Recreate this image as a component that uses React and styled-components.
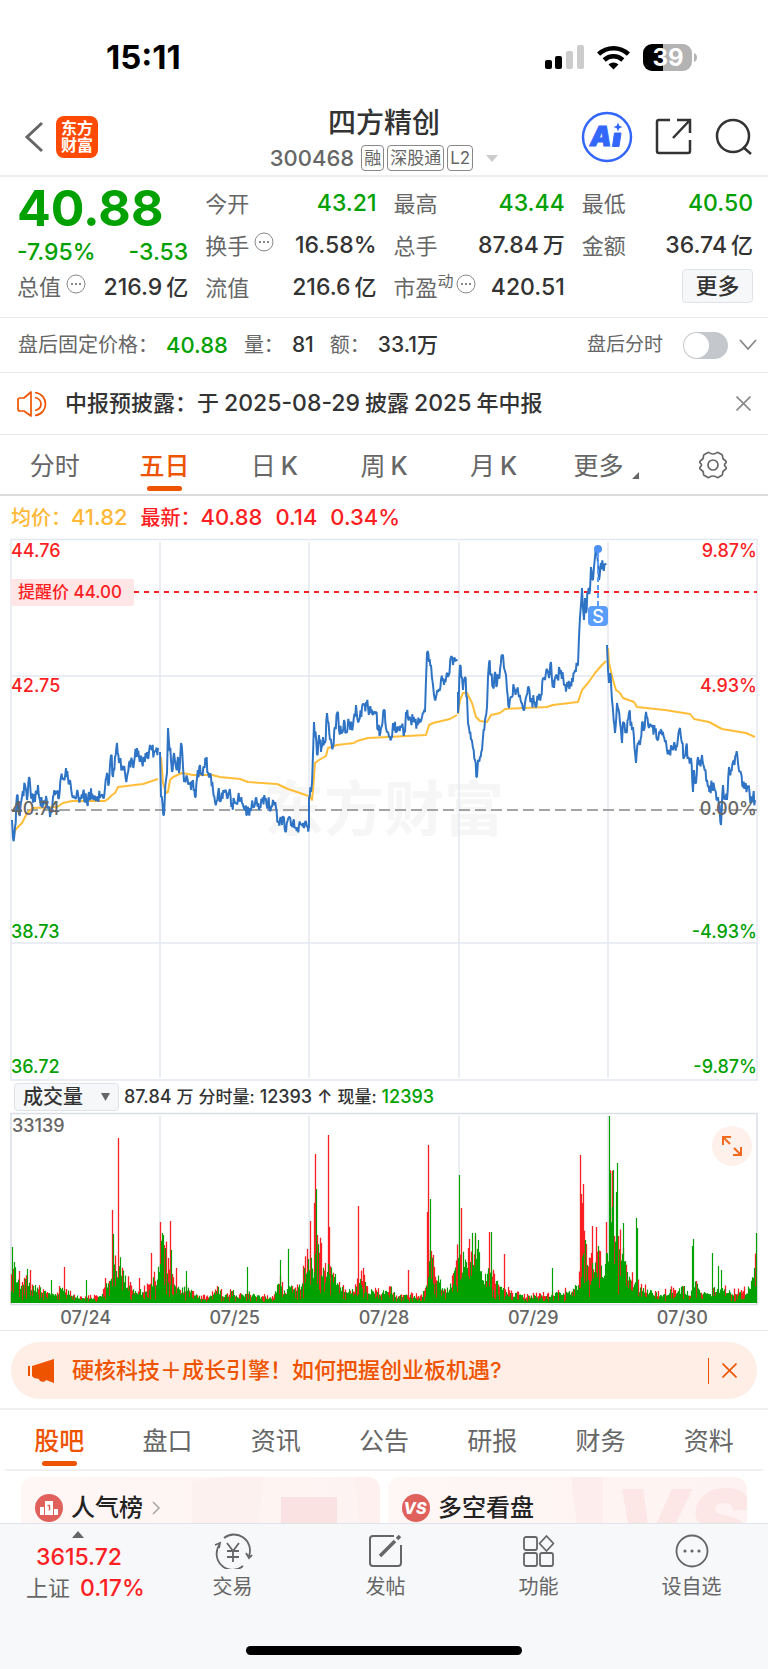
import React from "react";
import styled, { createGlobalStyle } from "styled-components";

const GREEN = "#02a102";
const RED = "#fb1f24";
const ORANGE = "#ee5400";

const GlobalStyle = createGlobalStyle`
  * {
    box-sizing: border-box;
  }
  body {
    margin: 0;
    background: #fff;
    color: #333;
    font-family: "Inter", "Noto Sans CJK SC", sans-serif;
    font-weight: 500;
    line-height: 1.3;
  }
  button,
  input,
  select {
    font: inherit;
    color: inherit;
  }
  button {
    border: 0;
    padding: 0;
    background: transparent;
    cursor: pointer;
  }
  svg {
    display: block;
    flex-shrink: 0;
  }
`;

const Page = styled.div`
  display: flex;
  flex-direction: column;
`;

const StatusBar = styled.div`
  display: flex;
  align-items: center;
  justify-content: space-between;
  height: 100px;
  padding: 14px 70px 0 106px;
  color: #000;

  .time {
    font-size: 33px;
    font-weight: 700;
  }
  .icons {
    display: flex;
    align-items: center;
    gap: 13px;
  }
`;

const Header = styled.header`
  display: grid;
  grid-template-columns: 1fr auto 1fr;
  align-items: center;
  height: 77px;
  padding: 0 16px 2px 24px;
  border-bottom: 2px solid #eeeef0;

  .left {
    display: flex;
    align-items: center;
    gap: 12px;
  }
  .right {
    display: flex;
    align-items: center;
    justify-content: flex-end;
    gap: 22px;
  }
`;

const Logo = styled.a`
  display: grid;
  place-content: center;
  width: 42px;
  height: 42px;
  border-radius: 8px;
  background: #ff4a03;
  color: #fff;
  font-size: 16px;
  font-weight: 700;
  line-height: 17px;
  text-decoration: none;
`;

const Title = styled.div`
  display: flex;
  flex-direction: column;
  align-items: center;
  gap: 4px;
  padding: 5px 8px 0 0;

  h1 {
    margin: 0;
    font-size: 28px;
    font-weight: 500;
    line-height: 34px;
  }
  .code {
    display: flex;
    align-items: center;
    gap: 3px;
    color: #666;
    font-size: 22px;
    line-height: 28px;
  }
  .code svg {
    margin-left: 10px;
  }
`;

const Tag = styled.span`
  margin-left: ${(p) => (p.$first ? "4px" : "0")};
  padding: 0 2px;
  border: 1px solid #888;
  border-radius: 4px;
  font-size: 17px;
  font-weight: 400;
  line-height: 24px;
`;

const Quote = styled.section`
  display: grid;
  grid-template-columns: repeat(4, minmax(0, 1fr));
  column-gap: 17px;
  padding: 6px 15px 8px 17px;
  border-bottom: 1px solid #e8eaf0;
  font-size: 23px;
`;

const QuoteColumn = styled.div`
  display: flex;
  flex-direction: column;

  .price {
    color: ${GREEN};
    font-size: 50px;
    font-weight: 700;
    line-height: 50px;
  }
  .change {
    display: flex;
    justify-content: space-between;
    color: ${GREEN};
    line-height: 38px;
  }
`;

const Stat = styled.div`
  display: flex;
  align-items: center;
  height: ${(p) => (p.$short ? "36px" : "42px")};
  padding-bottom: ${(p) => (p.$short ? "3px" : "0")};
  white-space: nowrap;

  .label {
    color: #666;
    font-size: 22px;
    font-weight: 400;
  }
  .sup {
    align-self: flex-start;
    color: #666;
    font-size: 16px;
    font-weight: 400;
    line-height: 28px;
  }
  svg {
    margin: 0 0 8px 5px;
  }
  .sup + svg {
    margin-left: 2px;
  }
  .value {
    margin-left: auto;
    color: ${(p) => (p.$green ? GREEN : "#333")};
  }
  .unit {
    margin-left: 4px;
    font-size: 22px;
  }
`;

const MoreButton = styled.button`
  align-self: flex-end;
  width: 71px;
  height: 34px;
  margin-top: 2px;
  border: 1px solid #dfe2e8;
  border-radius: 4px;
  background: #f6f7f9;
  font-size: 22px;
  line-height: 32px;
`;

const AfterHours = styled.section`
  display: flex;
  align-items: center;
  height: 55px;
  padding: 0 11px 0 18px;
  border-bottom: 1px solid #e8eaf0;
  font-size: 21px;

  .name {
    color: #666;
    font-size: 20px;
    font-weight: 400;
  }
  .num {
    margin: 0 16px 0 8px;
  }
  .green {
    color: ${GREEN};
    font-size: 22px;
  }
  .minute {
    display: flex;
    align-items: center;
    gap: 20px;
    margin-left: auto;
    color: #666;
    font-size: 19px;
    font-weight: 400;
  }
`;

const Switch = styled.input`
  appearance: none;
  width: 45px;
  height: 27px;
  margin: 0;
  padding: 1px;
  border-radius: 14px;
  background: #c4c7cc;
  cursor: pointer;

  &::before {
    content: "";
    display: block;
    width: 25px;
    height: 25px;
    border-radius: 50%;
    background: #fff;
  }
  &:checked {
    background: ${ORANGE};
  }
  &:checked::before {
    margin-left: 18px;
  }
`;

const Notice = styled.section`
  display: flex;
  align-items: center;
  height: 62px;
  padding: 0 17px;
  border-bottom: 1px solid #e4e6ea;
  font-size: 22px;

  p {
    flex: 1;
    margin: 0 0 0 18px;
  }
  .num {
    margin: 0 5px;
    font-size: 23px;
  }
`;

const Tabs = styled.nav`
  display: grid;
  grid-template-columns: repeat(7, 1fr);
  height: 61px;
  margin: ${(p) => p.$margin || "0"};
  border-bottom: 2px solid ${(p) => p.$line};
`;

const Tab = styled.button`
  display: flex;
  flex-direction: column;
  align-items: center;
  justify-content: flex-end;
  gap: 3px;
  padding-bottom: ${(p) => (p.$icon ? "14px" : "3px")};
  color: ${(p) => (p.$active ? ORANGE : "#666")};
  font-size: 25px;
  font-weight: ${(p) => (p.$active ? 500 : 400)};
  line-height: 34px;
  white-space: nowrap;

  &::after {
    content: "";
    display: ${(p) => (p.$icon ? "none" : "block")};
    width: 35px;
    height: 5px;
    border-radius: 3px;
    background: ${(p) => (p.$active ? ORANGE : "transparent")};
  }
  .latin {
    margin-left: 5px;
    font-weight: 500;
  }
  .more {
    display: flex;
    align-items: flex-end;
    gap: 9px;
    padding-left: 6px;
  }
  .more svg {
    margin-bottom: 4px;
  }
`;

const Averages = styled.div`
  display: flex;
  align-items: center;
  gap: 13px;
  height: 43px;
  padding: 0 11px;
  color: ${RED};
  font-size: 22px;

  .label {
    font-size: 20px;
  }
  .avg {
    color: #ffb836;
  }
`;

const ChartBox = styled.div`
  position: relative;
  margin: 0 11px;

  > svg {
    width: 100%;
    height: auto;
    overflow: visible;
  }
  text {
    font-size: 18px;
  }
`;

const VolumeBar = styled.div`
  display: flex;
  align-items: center;
  gap: 5px;
  height: 32px;
  padding: 0 14px;
  color: #333;
  font-size: 18px;
  white-space: nowrap;

  .cjk {
    font-size: 17px;
  }
  .green {
    color: ${GREEN};
  }
`;

const SelectWrap = styled.label`
  display: grid;
  align-items: center;

  select,
  svg {
    grid-area: 1 / 1;
  }
  select {
    appearance: none;
    width: 105px;
    height: 28px;
    padding: 0 8px;
    border: 1px solid #dfe2e8;
    border-radius: 4px;
    background: #f6f7f9;
    font-size: 20px;
    line-height: 26px;
  }
  svg {
    justify-self: end;
    margin-right: 9px;
    pointer-events: none;
  }
`;

const ExpandButton = styled.button`
  position: absolute;
  top: 13px;
  right: 5px;
  display: grid;
  place-items: center;
  width: 40px;
  height: 40px;
  border-radius: 50%;
  background: #fef1eb;
`;

const Dates = styled.div`
  display: grid;
  grid-template-columns: repeat(5, 1fr);
  height: 26px;
  padding: 0 11px;
  border-bottom: 1px solid #e4e6ec;
  color: #666;
  font-size: 18px;
  line-height: 26px;
  text-align: center;
`;

const BannerArea = styled.section`
  padding: 11px 11px 9px;
  border-bottom: 2px solid #f0f0f2;
`;

const Banner = styled.div`
  display: flex;
  align-items: center;
  height: 57px;
  padding: 0 20px 0 17px;
  border-radius: 29px;
  background: #feeee6;
  color: ${ORANGE};
  font-size: 22px;

  a {
    flex: 1;
    margin-left: 17px;
    color: inherit;
    text-decoration: none;
  }
  .bar {
    width: 1px;
    height: 26px;
    margin-right: 13px;
    background: ${ORANGE};
  }
`;

const Cards = styled.section`
  display: grid;
  grid-template-columns: 1fr 1fr;
  gap: 8px;
  height: 52px;
  padding: 6px 21px 0;
  overflow: hidden;
`;

const Card = styled.a`
  display: flex;
  align-items: center;
  gap: 8px;
  height: 62px;
  padding-left: 14px;
  border-radius: 12px 12px 0 0;
  background: linear-gradient(90deg, #fef7f5, #fef3f2);
  color: #222;
  font-size: 24px;
  line-height: 26px;
  overflow: hidden;
  text-decoration: none;

  .art {
    align-self: flex-start;
    margin-left: auto;
  }
`;

const BottomNav = styled.nav`
  display: grid;
  grid-template-columns: 156px repeat(4, 1fr);
  height: 104px;
  border-top: 1px solid #dfe3ea;
  background: #f7f8fa;
`;

const IndexButton = styled.button`
  display: flex;
  flex-direction: column;
  align-items: flex-start;
  padding: 7px 0 0 26px;
  color: ${RED};
  font-size: 23px;
  line-height: 31px;
  white-space: nowrap;

  svg {
    margin-left: 46px;
  }
  .point {
    margin: 4px 0 0 10px;
  }
  .name {
    margin-right: 10px;
    color: #666;
    font-size: 22px;
    font-weight: 400;
  }
`;

const NavButton = styled.button`
  display: flex;
  flex-direction: column;
  align-items: center;
  gap: 4px;
  padding-top: 9px;
  color: #666;
  font-size: 20px;
  font-weight: 400;
  line-height: 28px;
`;

const HomeArea = styled.div`
  display: grid;
  justify-items: center;
  align-items: start;
  height: 42px;
  padding-top: 19px;
  background: #f7f8fa;

  div {
    width: 36%;
    height: 9px;
    border-radius: 5px;
    background: #000;
  }
`;

/* one list per trading day, plot units: x, y */
const PRICE = [
  "1,281 2,299 4,288 6,256 8,274 11,258 14,246 16,261 18,238 20,258 24,263 27,246 29,261 32,266 35,257 39,278 42,258 44,256 46,254 48,259 50,238 52,239 55,229 57,239 59,241 61,256 64,258 67,255 70,260 72,254 76,264 78,253 82,258 86,258 89,259 92,258 94,249 96,234 98,244 100,216 102,238 104,218 106,204 108,224 111,228 114,234 116,238 118,224 121,221 123,224 126,209 128,218 131,223 133,218 136,213 138,213 139,206 141,211 143,214 145,211 147,209",
  "149,213 150,258 153,276 155,241 156,234 157,189 158,204 160,221 161,233 163,214 165,228 167,218 168,234 170,204 172,228 173,243 176,238 178,244 180,251 182,241 184,258 186,239 189,226 191,234 193,228 195,221 197,233 200,238 202,251 204,263 207,254 210,261 213,253 216,259 218,253 221,264 224,264 227,259 231,264 234,271 236,276 239,269 242,268 246,264 248,271 251,263 254,261 257,264 261,268 262,261 265,269 267,283 271,286 273,278 275,293 278,278 282,283 285,289 288,286 292,284 296,288 298,286",
  "298,289 298,258 300,253 301,244 303,183 306,216 308,196 310,213 312,198 314,204 316,174 319,201 322,208 324,188 327,173 328,191 331,194 333,181 335,193 338,184 342,186 345,166 348,181 351,168 353,166 357,168 360,174 362,176 365,173 367,191 370,189 373,171 375,189 378,198 381,198 382,184 386,193 390,188 394,193 395,173 399,179 402,183 406,184 411,178 414,173 415,141 416,114 418,123 420,126 421,139 423,156 425,158 427,153 430,141 433,146 437,138 440,118 442,126 443,119 446,122",
  "447,153 447,174 449,126 451,138 452,151 454,138 456,158 457,184 458,189 460,201 462,209 464,221 466,238 467,221 469,218 471,211 472,198 474,181 476,168 477,138 478,124 480,136 482,148 484,133 486,146 489,131 492,116 493,129 495,136 496,151 498,169 501,158 503,148 506,151 508,158 511,164 514,164 517,148 520,161 523,163 527,161 530,156 532,139 534,141 537,133 538,139 540,123 541,141 543,149 546,139 550,131 553,146 557,148 561,139 564,131 567,126 568,98 569,78 571,49 573,81 574,59 575,74 577,54 579,51 580,28 582,41 583,28 584,18 586,14 587,24 588,41 590,24 592,27 595,26",
  "596,106 597,131 598,144 599,134 601,161 602,171 604,194 606,164 609,184 611,204 612,183 615,193 618,174 621,191 622,188 625,224 627,204 629,206 631,184 633,191 635,173 638,189 641,188 644,193 647,201 651,196 654,203 658,211 662,211 666,208 669,189 671,204 673,219 675,208 678,219 680,219 682,253 683,231 685,244 687,218 688,226 691,216 693,228 696,241 697,248 701,248 704,251 707,258 710,286 712,246 714,258 716,261 718,228 720,231 722,223 725,216 727,224 730,234 732,248 734,246 737,248 740,264 742,258 744,261",
];

const AVERAGE = [
  "2,298 5,290 11,284 16,274 22,269 46,268 52,264 61,262 94,262 97,260 101,256 104,254 107,248 132,245 147,240",
  "150,218 152,244 155,254 157,253 159,241 162,238 171,234 182,236 201,236 209,238 229,240 237,243 266,245 277,250 289,254 297,257",
  "298,256 301,261 302,251 304,224 308,221 315,217 317,209 326,206 343,204 346,202 357,199 377,198 415,196 418,186 422,184 439,180 446,176",
  "447,175 449,161 452,154 456,154 461,164 465,178 469,182 476,183 480,176 489,174 494,170 536,168 542,166 567,163 571,151 577,144 584,134 591,126 595,122",
  "597,109 598,124 602,141 605,151 609,154 612,159 623,163 626,168 654,171 679,175 683,180 698,183 711,190 735,194 744,198",
];

/* typical volume along the five days */
const VOLUME =
  "0,20 3,30 6,20 10,13 16,20 22,14 32,10 42,8 52,12 60,7 72,4 90,5 97,18 100,30 104,30 108,40 112,24 120,12 132,9 140,22 146,22 149,40 151,64 154,50 157,30 162,22 166,12 175,12 190,4 200,5 205,15 212,5 222,10 225,5 238,8 250,5 262,4 268,22 272,10 280,14 290,15 295,35 299,38 302,34 307,50 312,28 320,30 330,12 345,12 350,25 358,10 370,8 380,12 385,5 400,6 410,5 416,15 420,50 423,30 430,15 438,10 444,35 448,45 455,35 463,55 468,40 472,20 478,28 483,20 490,12 500,8 515,5 535,7 550,8 560,10 567,18 570,35 573,45 578,30 585,40 592,30 597,50 598,90 603,80 607,50 613,40 618,22 630,12 650,6 660,12 665,8 672,15 678,5 683,20 690,8 700,8 703,12 712,12 720,8 735,10 740,20 746,50";
const RED_PEAKS =
  "101,93 107,165 140,50 149,81 159,82 165,35 53,36 8,32 19,33 94,25 128,25 296,54 299,82 304,149 303,100 317,168 309,50 318,76 347,97 352,35 397,33 417,158 416,91 450,95 478,71 493,49 569,148 570,109 571,100 572,119 581,77 585,76 595,81";
const GREEN_PEAKS =
  "1,56 3,41 16,34 102,69 40,23 75,23 152,68 160,53 175,32 236,36 269,43 277,54 293,35 305,114 297,44 419,104 448,128 461,70 464,70 467,63 480,71 541,35 574,63 587,57 598,187 599,130 601,96 602,133 605,111 606,140 612,80 625,85 626,75 682,64 681,57 701,50 707,37 710,33 745,70";

const parse = (s) => s.split(" ").map((p) => p.split(",").map(Number));

const noise = (i) => {
  const v = Math.sin(i * 127.1 + 11.7) * 43758.5453;
  return v - Math.floor(v);
};

function at(points, x) {
  let i = 1;
  while (i < points.length - 1 && points[i][0] < x) i++;
  const [x0, y0] = points[i - 1];
  const [x1, y1] = points[i];
  return x1 === x0 ? y1 : y0 + ((y1 - y0) * (x - x0)) / (x1 - x0);
}

// fills the space between the stored points with minute ticks
function pricePath(day) {
  const points = parse(day);
  let d = `M${points[0]}`;
  for (let i = 1; i < points.length; i++) {
    const [x0, y0] = points[i - 1];
    const [x1, y1] = points[i];
    const steps = Math.max(1, Math.round((x1 - x0) / 0.7));
    for (let k = 1; k < steps; k++) {
      const x = x0 + ((x1 - x0) * k) / steps;
      const y = y0 + ((y1 - y0) * k) / steps + (noise(x * 3) - 0.5) * 14;
      d += `L${x.toFixed(1)},${y.toFixed(1)}`;
    }
    d += `L${x1},${y1}`;
  }
  return d;
}

function volumePaths() {
  const base = parse(VOLUME);
  let red = "";
  let green = "";
  const bar = (x, h) => `M${x + 0.5},190v${-h.toFixed(1)}`;
  for (let x = 0; x < 746; x++) {
    const h = at(base, x) + 1;
    const isRed = noise(x + 900) < (x > 596 ? 0.25 : 0.42);
    if (isRed) red += bar(x, h * (0.8 + noise(x) * 0.8));
    green += bar(x, h * (isRed ? 0.15 + noise(x + 50) * 0.6 : 0.7 + noise(x) * 0.6));
  }
  parse(RED_PEAKS).forEach(([x, h]) => (red += bar(x, h)));
  parse(GREEN_PEAKS).forEach(([x, h]) => (green += bar(x, h)));
  return { red, green };
}

const LEVELS = [
  { y: 18, price: "44.76", rate: "9.87%", color: RED },
  { y: 153, price: "42.75", rate: "4.93%", color: RED },
  { y: 276, price: "40.74", rate: "0.00%", color: "#666" },
  { y: 399, price: "38.73", rate: "-4.93%", color: GREEN },
  { y: 534, price: "36.72", rate: "-9.87%", color: GREEN },
];

const Info = () => (
  <svg width="20" height="20" viewBox="0 0 20 20" fill="none" stroke="#888">
    <circle cx="10" cy="10" r="9" />
    <path d="M5 10h2M9 10h2M13 10h2" strokeWidth="2" />
  </svg>
);

const Cross = ({ color, size }) => (
  <svg width={size} height={size} viewBox="0 0 14 14" stroke={color} strokeWidth="1.5">
    <path d="M.5.5l13 13M13.5.5l-13 13" />
  </svg>
);

const PriceChart = () => (
  <ChartBox>
    <svg viewBox="0 0 746 542" role="img" aria-label="五日走势">
      <text x="253" y="292" style={{ fontSize: 60, fontWeight: 700 }} fill="#f6f6f6">
        东方财富
      </text>
      <path d="M0 .5h746V541H0zM0 137h746M0 404h746" fill="none" stroke="#e3e7ef" strokeWidth="1.5" />
      <path d="M149 3v536M298 3v536M448 3v536M597 3v536" stroke="#e3e7ef" strokeWidth="1.5" />
      <path d="M0 271h746" stroke="#888" strokeWidth="1.6" strokeDasharray="11 5" />
      <path d="M123 53h623" stroke={RED} strokeWidth="1.8" strokeDasharray="5 5" />
      {AVERAGE.map((day) => (
        <polyline key={day} points={day} fill="none" stroke="#ffbd38" strokeWidth="2" strokeLinejoin="round" />
      ))}
      {PRICE.map((day) => (
        <path key={day} d={pricePath(day)} fill="none" stroke="#2f74c4" strokeWidth="2" strokeLinejoin="bevel" />
      ))}
      <path d="M587 14v53" stroke="#5a9dfb" strokeWidth="2" strokeDasharray="5 3" />
      <circle cx="587" cy="10" r="4" fill="#4a90f5" />
      <rect x="577" y="67" width="20" height="20" rx="4" fill="#5a9dfb" />
      <text x="587" y="84" textAnchor="middle" fill="#fff">
        S
      </text>
      <rect x="0" y="40" width="123" height="27" rx="2" fill="#fee6e6" />
      <text x="7" y="59" style={{ fontSize: 17 }} fill={RED}>
        提醒价 44.00
      </text>
      {LEVELS.map((l) => (
        <g key={l.y} fill={l.color}>
          <text x="0" y={l.y}>{l.price}</text>
          <text x="746" y={l.y} textAnchor="end">{l.rate}</text>
        </g>
      ))}
    </svg>
  </ChartBox>
);

const VolumeChart = () => {
  const { red, green } = volumePaths();
  return (
    <ChartBox>
      <svg viewBox="0 0 746 192" role="img" aria-label="成交量">
        <path d="M0 .5h746V191.500H0z" fill="none" stroke="#d9dde5" strokeWidth="1.5" />
        <path d="M149 3v187M298 3v187M448 3v187M597 3v187" stroke="#e3e7ef" strokeWidth="1.5" />
        <path d={red} stroke={RED} strokeWidth="1.3" />
        <path d={green} stroke={GREEN} strokeWidth="1.2" />
        <text x="1" y="19" fill="#666">
          33139
        </text>
      </svg>
      <ExpandButton aria-label="全屏">
        <svg width="20" height="20" viewBox="0 0 20 20" fill="none" stroke="#f26a1f" strokeWidth="2">
          <path d="M1 9V1h8M1 1l7 7M19 11v8h-8M19 19l-7-7" />
        </svg>
      </ExpandButton>
    </ChartBox>
  );
};

const App = () => {
  const [tab, setTab] = React.useState("五日");
  const [section, setSection] = React.useState("股吧");
  const [minute, setMinute] = React.useState(false);

  return (
    <Page>
      <GlobalStyle />
      <StatusBar>
        <span className="time">15:11</span>
        <div className="icons">
          <svg width="39" height="25" viewBox="0 0 39 25">
            <rect x="0" y="15" width="7" height="9" rx="2" />
            <rect x="10" y="11" width="7" height="13" rx="2" />
            <rect x="21" y="6" width="7" height="18" rx="2" fill="#ccc" />
            <rect x="32" y="0" width="7" height="24" rx="2" fill="#ccc" />
          </svg>
          <svg width="33" height="25" viewBox="0 0 33 25" fill="none" stroke="#000" strokeWidth="4.500">
            <path d="M1.600 9.200a21.500 21.500 0 0 1 29.800 0" />
            <path d="M7.200 15a13.500 13.500 0 0 1 18.600 0" />
            <path d="M16.500 24.500l-5-5a7.200 7.200 0 0 1 10 0z" fill="#000" stroke="none" />
          </svg>
          <svg width="55" height="27" viewBox="0 0 55 27">
            <path d="M20 0H9a9 9 0 0 0-9 9v9a9 9 0 0 0 9 9h11z" />
            <path d="M20 0h20a9 9 0 0 1 9 9v9a9 9 0 0 1-9 9H20zM51 9c4 1 4 8 0 9z" fill="#b3b3b3" />
            <text x="25" y="22" fontSize="24" fontWeight="700" fill="#fff" textAnchor="middle">
              39
            </text>
          </svg>
        </div>
      </StatusBar>

      <Header>
        <div className="left">
          <button aria-label="返回">
            <svg width="20" height="32" viewBox="0 0 20 32" fill="none" stroke="#666" strokeWidth="3">
              <path d="M18 2L3 16l15 14" />
            </svg>
          </button>
          <Logo href="#">
            <span>东方</span>
            <span>财富</span>
          </Logo>
        </div>
        <Title>
          <h1>四方精创</h1>
          <div className="code">
            300468
            <Tag $first>融</Tag>
            <Tag>深股通</Tag>
            <Tag>L2</Tag>
            <svg width="12" height="7" viewBox="0 0 12 7" fill="#ccc">
              <path d="M0 0h12L6 7z" />
            </svg>
          </div>
        </Title>
        <div className="right">
          <button aria-label="Ai">
            <svg width="52" height="52" viewBox="0 0 52 52" fill="#3366fb">
              <circle cx="26" cy="26" r="24" fill="none" stroke="#3366fb" strokeWidth="2.500" />
              <text x="9" y="35" fontSize="27" fontWeight="900" fontStyle="italic" stroke="#3366fb" strokeWidth="1">
                A
              </text>
              <path d="M33.500 22h6.500l-2 13.500h-6.500z" stroke="#3366fb" strokeLinejoin="round" />
              <path d="M37 11.500l1.300 3.200 3.200 1.300-3.200 1.300-1.300 3.200-1.300-3.200-3.200-1.300 3.200-1.300z" />
            </svg>
          </button>
          <button aria-label="分享">
            <svg width="37" height="37" viewBox="0 0 37 37" fill="none" stroke="#333" strokeWidth="2.500">
              <path d="M15 2H4a2 2 0 0 0-2 2v29a2 2 0 0 0 2 2h29a2 2 0 0 0 2-2V22M22 2h13v13M35 2L18 20" />
            </svg>
          </button>
          <button aria-label="搜索">
            <svg width="38" height="38" viewBox="0 0 38 38" fill="none" stroke="#333" strokeWidth="2.500">
              <circle cx="19" cy="18" r="16" />
              <path d="M29 29l8 7" />
            </svg>
          </button>
        </div>
      </Header>

      <Quote>
        <QuoteColumn>
          <span className="price">40.88</span>
          <div className="change">
            <span>-7.95%</span>
            <span>-3.53</span>
          </div>
          <Stat $short>
            <span className="label">总值</span>
            <Info />
            <span className="value">216.9<span className="unit">亿</span></span>
          </Stat>
        </QuoteColumn>
        <QuoteColumn>
          <Stat $green>
            <span className="label">今开</span>
            <span className="value">43.21</span>
          </Stat>
          <Stat>
            <span className="label">换手</span>
            <Info />
            <span className="value">16.58%</span>
          </Stat>
          <Stat>
            <span className="label">流值</span>
            <span className="value">216.6<span className="unit">亿</span></span>
          </Stat>
        </QuoteColumn>
        <QuoteColumn>
          <Stat $green>
            <span className="label">最高</span>
            <span className="value">43.44</span>
          </Stat>
          <Stat>
            <span className="label">总手</span>
            <span className="value">87.84<span className="unit">万</span></span>
          </Stat>
          <Stat>
            <span className="label">市盈</span>
            <span className="sup">动</span>
            <Info />
            <span className="value">420.51</span>
          </Stat>
        </QuoteColumn>
        <QuoteColumn>
          <Stat $green>
            <span className="label">最低</span>
            <span className="value">40.50</span>
          </Stat>
          <Stat>
            <span className="label">金额</span>
            <span className="value">36.74<span className="unit">亿</span></span>
          </Stat>
          <MoreButton>更多</MoreButton>
        </QuoteColumn>
      </Quote>

      <AfterHours>
        <span className="name">盘后固定价格：</span>
        <span className="num green">40.88</span>
        <span className="name">量：</span>
        <span className="num">81</span>
        <span className="name">额：</span>
        <span className="num">33.1万</span>
        <label className="minute">
          盘后分时
          <Switch type="checkbox" checked={minute} onChange={(e) => setMinute(e.target.checked)} />
        </label>
        <button aria-label="展开">
          <svg width="29" height="12" viewBox="0 0 29 12" fill="none" stroke="#888" strokeWidth="1.800">
            <path d="M12 1l8 9 8-9" />
          </svg>
        </button>
      </AfterHours>

      <Notice>
        <svg width="30" height="26" viewBox="0 0 30 26" fill="none" stroke={ORANGE} strokeWidth="1.700">
          <path d="M14 1v24l-7-5H3a2 2 0 0 1-2-2V9a2 2 0 0 1 2-2h4z" strokeLinejoin="round" />
          <path d="M18 6.500c8 2 8 11 0 13M18 1.500c14 2 14 21 0 23" />
        </svg>
        <p>
          中报预披露：于<span className="num">2025-08-29</span>披露<span className="num">2025</span>年中报
        </p>
        <button aria-label="关闭">
          <Cross color="#888" size={15} />
        </button>
      </Notice>

      <Tabs $line="#dcdcdf">
        {["分时", "五日"].map((t) => (
          <Tab key={t} $active={tab === t} onClick={() => setTab(t)}>
            <span>{t}</span>
          </Tab>
        ))}
        {["日", "周", "月"].map((t) => (
          <Tab key={t} $active={tab === t} onClick={() => setTab(t)}>
            <span>{t}<span className="latin">K</span></span>
          </Tab>
        ))}
        <Tab>
          <span className="more">
            更多
            <svg width="7" height="7" viewBox="0 0 7 7" fill="#666">
              <path d="M7 0v7H0z" />
            </svg>
          </span>
        </Tab>
        <Tab $icon aria-label="设置">
          <svg width="30" height="30" viewBox="0 0 30 30" fill="none" stroke="#666" strokeWidth="1.700">
            <path
              d="M10 2.500c1-.6 2 1.500 5 1.500s4-2.100 5-1.500l4 2.300c1 .7.200 2.200 1 3.700s2.800 1.700 3.200 3.300c.3 1.500-1.700 1.700-1.700 3.200s2 1.700 1.700 3.200c-.4 1.600-2.400 1.800-3.200 3.300s0 3-1 3.700l-4 2.300c-1 .6-2-1.500-5-1.500s-4 2.100-5 1.500l-4-2.300c-1-.7-.2-2.200-1-3.700s-2.800-1.700-3.200-3.300c-.3-1.500 1.700-1.700 1.700-3.200s-2-1.700-1.700-3.200C2.200 10.200 4.200 10 5 8.500s0-3 1-3.700z"
              strokeLinejoin="round"
            />
            <circle cx="15" cy="15" r="5" />
          </svg>
        </Tab>
      </Tabs>

      <Averages>
        <span className="avg"><span className="label">均价：</span>41.82</span>
        <span><span className="label">最新：</span>40.88</span>
        <span>0.14</span>
        <span>0.34%</span>
      </Averages>

      <PriceChart />
      <VolumeBar>
        <SelectWrap>
          <select aria-label="指标" defaultValue="成交量">
            <option>成交量</option>
          </select>
          <svg width="9" height="8" viewBox="0 0 9 8" fill="#666">
            <path d="M0 0h9L4.500 8z" />
          </svg>
        </SelectWrap>
        <span>87.84</span>
        <span className="cjk">万</span>
        <span className="cjk">分时量:</span>
        <span>12393 ↑</span>
        <span className="cjk">现量:</span>
        <span className="green">12393</span>
      </VolumeBar>
      <VolumeChart />
      <Dates>
        {["07/24", "07/25", "07/28", "07/29", "07/30"].map((d) => (
          <span key={d}>{d}</span>
        ))}
      </Dates>

      <BannerArea>
        <Banner>
          <svg width="27" height="24" viewBox="0 0 27 24" fill={ORANGE}>
            <path d="M0 7h2v10H0zM4 7L26 0v24l-8-3c-1 3-7 2-7-1l-5-1-2-2z" />
          </svg>
          <a href="#">硬核科技＋成长引擎！如何把握创业板机遇?</a>
          <span className="bar" />
          <button aria-label="关闭">
            <Cross color={ORANGE} size={15} />
          </button>
        </Banner>
      </BannerArea>

      <Tabs $line="#f0f0f2" $margin="0 5px">
        {["股吧", "盘口", "资讯", "公告", "研报", "财务", "资料"].map((t) => (
          <Tab key={t} $active={section === t} onClick={() => setSection(t)}>
            <span>{t}</span>
          </Tab>
        ))}
      </Tabs>

      <Cards>
        <Card href="#">
          <svg width="28" height="28" viewBox="0 0 28 28">
            <circle cx="14" cy="14" r="14" fill="#e0605c" />
            <path d="M5 13h4v8H5zM10 7h8v14h-8zM19 15h4v6h-4z" fill="#fff" />
            <path d="M12.500 11.500h2v5" fill="none" stroke="#e0605c" strokeWidth="1.500" />
          </svg>
          人气榜
          <svg width="10" height="14" viewBox="0 0 10 14" fill="none" stroke="#aaa" strokeWidth="1.700">
            <path d="M2 1l6 6-6 6" />
          </svg>
          <svg className="art" width="188" height="62" viewBox="0 0 188 62" fill="#fdebea">
            <path d="M0 4l35-4h37l-8 62H0z" opacity=".4" />
            <path d="M89 20h56v42H89z" fill="#fbe2e2" />
            <path d="M162 0h26v62h-18z" opacity=".4" />
          </svg>
        </Card>
        <Card href="#">
          <svg width="28" height="28" viewBox="0 0 28 28">
            <circle cx="14" cy="14" r="14" fill="#e0605c" />
            <text x="13" y="20" fontSize="16" fontWeight="800" fontStyle="italic" fill="#fff" textAnchor="middle">
              VS
            </text>
          </svg>
          多空看盘
          <svg className="art" width="176" height="62" viewBox="0 0 176 62" fill="#fce6e6">
            <path d="M0 0h32v62H8z" opacity=".5" />
            <text x="42" y="80" fontSize="94" fontWeight="900" fontStyle="italic">
              VS
            </text>
          </svg>
        </Card>
      </Cards>

      <BottomNav>
        <IndexButton>
          <svg width="12" height="7" viewBox="0 0 12 7" fill="#666">
            <path d="M0 7h12L6 0z" />
          </svg>
          <span className="point">3615.72</span>
          <span>
            <span className="name">上证</span>
            0.17%
          </span>
        </IndexButton>
        <NavButton>
          <svg width="40" height="36" viewBox="0 0 40 36" fill="none" stroke="#666" strokeWidth="1.800">
            <path d="M11 5a16 16 0 0 1 25 18M2 12l5-2-1 5M7 11a16 16 0 0 0 23 22M33 20l3 5 3-3" />
            <path d="M14 10l6 8 6-8M14 18h12M14 24h12M20 18v11" />
          </svg>
          交易
        </NavButton>
        <NavButton>
          <svg width="36" height="36" viewBox="0 0 36 36" fill="none" stroke="#666" strokeWidth="2">
            <path d="M26 3H5a3 3 0 0 0-3 3v24a3 3 0 0 0 3 3h25a3 3 0 0 0 3-3V12" />
            <path d="M12 23L27 8M29 6l3-3" strokeWidth="3.500" />
          </svg>
          发帖
        </NavButton>
        <NavButton>
          <svg width="34" height="36" viewBox="0 0 34 36" fill="none" stroke="#666" strokeWidth="1.800">
            <rect x="2" y="4" width="13" height="13" rx="2" />
            <path d="M24.500 3l7 7.500-7 7.500-7-7.500z" strokeLinejoin="round" />
            <rect x="2" y="20" width="13" height="13" rx="2" />
            <rect x="18" y="20" width="13" height="13" rx="2" />
          </svg>
          功能
        </NavButton>
        <NavButton>
          <svg width="36" height="36" viewBox="0 0 36 36" fill="#666">
            <circle cx="18" cy="18" r="15.500" fill="none" stroke="#666" strokeWidth="1.800" />
            <circle cx="11" cy="18" r="1.600" />
            <circle cx="18" cy="18" r="1.600" />
            <circle cx="25" cy="18" r="1.600" />
          </svg>
          设自选
        </NavButton>
      </BottomNav>
      <HomeArea>
        <div />
      </HomeArea>
    </Page>
  );
};

export default App;
